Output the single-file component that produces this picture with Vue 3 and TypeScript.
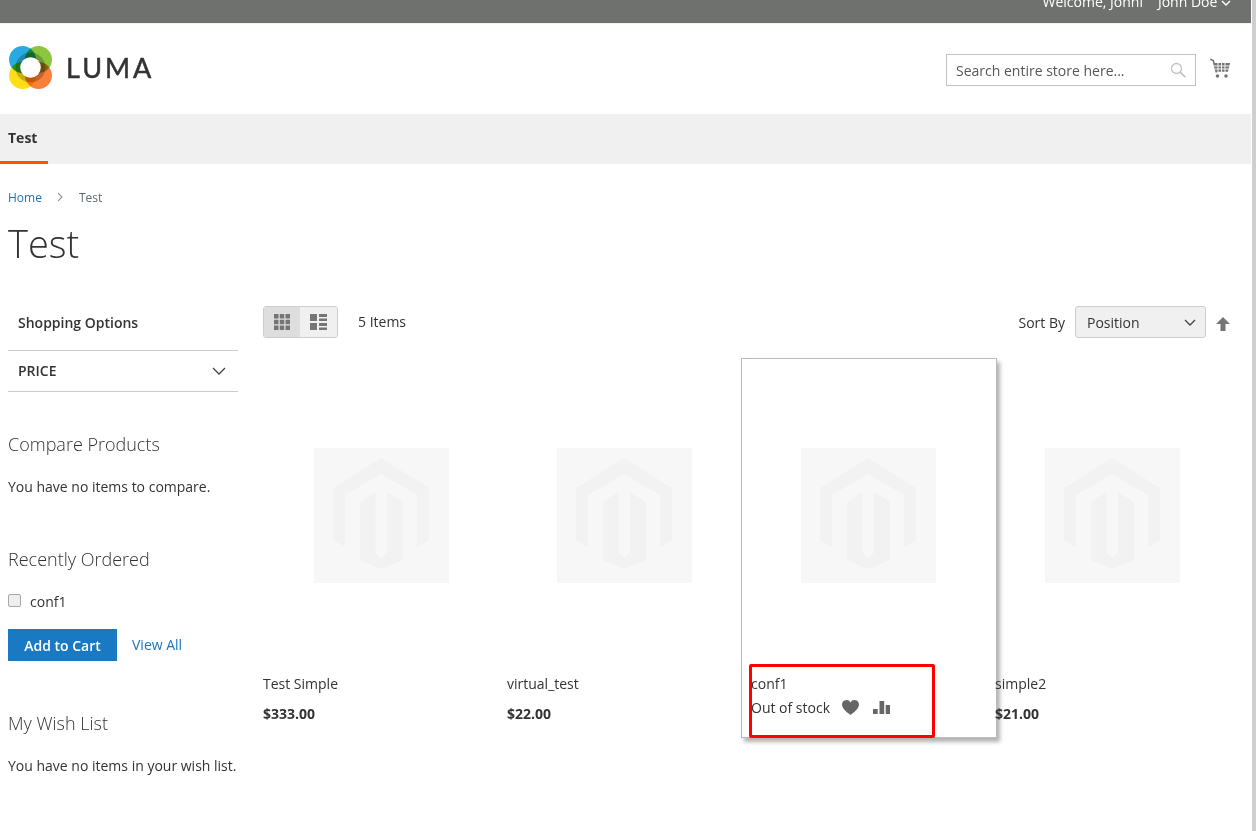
<script setup lang="ts">
interface Product {
  name: string
  price?: string
  hover?: boolean
}

const products: Product[] = [
  { name: 'Test Simple', price: '$333.00' },
  { name: 'virtual_test', price: '$22.00' },
  { name: 'conf1', hover: true },
  { name: 'simple2', price: '$21.00' },
]
</script>

<template>
  <div class="page">
    <div class="top-bar">
      <span>Welcome, Johni</span>
      <span class="customer">John Doe
        <svg width="10" height="6" viewBox="0 0 10 6"><path d="M1 1l4 4 4-4" fill="none" stroke="#fff" stroke-width="1.4" /></svg>
      </span>
    </div>

    <header class="header">
      <div class="logo">
        <svg class="logo-mark" width="43" height="43" viewBox="0 0 43 43">
          <circle cx="13.500" cy="13.500" r="13.500" fill="#29abe2" />
          <circle cx="29.500" cy="13.500" r="13.500" fill="#8cc63f" />
          <circle cx="13.500" cy="29.500" r="13.500" fill="#ffdd17" />
          <circle cx="29.500" cy="29.500" r="13.500" fill="#f9803a" />
          <circle cx="21.500" cy="21.500" r="15" fill="#000" opacity="0.22" />
          <circle cx="21.500" cy="21.500" r="10.300" fill="#fff" class="hole" />
        </svg>
        <span class="logo-text">LUMA</span>
      </div>
      <div class="header-right">
        <div class="search">
          <span>Search entire store here...</span>
          <svg width="16" height="16" viewBox="0 0 16 16">
            <circle cx="6.500" cy="6.500" r="5" fill="none" stroke="#c2c2c2" stroke-width="1.300" />
            <path d="M10.200 10.200l5 5" stroke="#c2c2c2" stroke-width="1.800" />
          </svg>
        </div>
        <svg class="cart" width="20" height="20" viewBox="0 0 20 20">
          <path d="M0.300 1.200l3 1.300 3.200 12" fill="none" stroke="#757575" stroke-width="1.600" />
          <path d="M3.500 5H20l-2 8.800H5.800z" fill="#757575" />
          <path d="M4 8h15.500M5 11h14M8 5v9M11.500 5v9M15 5v9" stroke="#fff" stroke-width="0.900" />
          <circle cx="7.500" cy="18" r="1.800" fill="#757575" />
          <circle cx="16" cy="18" r="1.800" fill="#757575" />
        </svg>
      </div>
    </header>

    <nav class="nav">
      <a class="nav-item">Test</a>
    </nav>

    <main class="content">
      <div class="breadcrumbs">
        <a>Home</a>
        <svg width="6" height="10" viewBox="0 0 6 10"><path d="M1 1l4 4-4 4" fill="none" stroke="#999" stroke-width="1.100" /></svg>
        <span class="current">Test</span>
      </div>
      <h1 class="title">Test</h1>

      <div class="columns">
        <aside class="sidebar">
          <div class="filter-title">Shopping Options</div>
          <div class="filter-row">
            <span>PRICE</span>
            <svg width="14" height="8" viewBox="0 0 14 8"><path d="M1 1l6 6 6-6" fill="none" stroke="#444" stroke-width="1.300" /></svg>
          </div>

          <h2 class="block-title compare">Compare Products</h2>
          <p class="block-text">You have no items to compare.</p>

          <h2 class="block-title ordered">Recently Ordered</h2>
          <label class="ordered-item"><input type="checkbox" /><span>conf1</span></label>
          <div class="ordered-actions">
            <button class="primary">Add to Cart</button>
            <a>View All</a>
          </div>

          <h2 class="block-title wish">My Wish List</h2>
          <p class="block-text">You have no items in your wish list.</p>
        </aside>

        <section class="products">
          <div class="toolbar">
            <div class="modes">
              <span class="mode active">
                <svg width="16" height="16" viewBox="0 0 16 16" fill="#757575">
                  <path d="M0 0h4.500v4.500H0zM5.750 0h4.500v4.500h-4.500zM11.500 0H16v4.500h-4.500zM0 5.750h4.500v4.500H0zM5.750 5.750h4.500v4.500h-4.500zM11.500 5.750H16v4.500h-4.500zM0 11.500h4.500V16H0zM5.750 11.500h4.500V16h-4.500zM11.500 11.500H16V16h-4.500z" />
                </svg>
              </span>
              <span class="mode">
                <svg width="17" height="16" viewBox="0 0 17 16" fill="#757575">
                  <path d="M0 0h7v7H0zM9 0h8v3H9zM9 4.500h8V7H9zM0 9h7v7H0zM9 9h8v3H9zM9 13.500h8V16H9z" />
                </svg>
              </span>
            </div>
            <span class="amount">5 Items</span>
            <div class="sorter">
              <span>Sort By</span>
              <div class="select">
                <span>Position</span>
                <svg width="12" height="7" viewBox="0 0 12 7"><path d="M1 1l5 5 5-5" fill="none" stroke="#444" stroke-width="1.300" /></svg>
              </div>
              <svg class="sort-arrow" width="14" height="14" viewBox="0 0 14 14"><path d="M7 0l7 7H9.500v7h-5V7H0z" fill="#757575" /></svg>
            </div>
          </div>

          <div class="grid">
            <article v-for="p in products" :key="p.name" class="product" :class="{ hover: p.hover }">
              <div class="photo">
                <svg width="135" height="135" viewBox="0 0 135 135">
                  <rect width="135" height="135" fill="#f7f7f7" />
                  <path d="M67 10l48 30v52l-12 7V47L67 26 31 47v52l-12-7V40z" fill="#f2f2f2" />
                  <path d="M61.500 44v61l5.500 5 6-5V44l16 10v58l-22 9-21-9V54z" fill="#f2f2f2" />
                </svg>
              </div>
              <div class="name">{{ p.name }}</div>
              <div v-if="p.price" class="price">{{ p.price }}</div>
              <div v-else class="stock-row">
                <span>Out of stock</span>
                <svg class="heart" width="17" height="15" viewBox="0 0 18 16">
                  <path d="M9 16C6 13.500 0 9.500 0 5a4.800 4.800 0 0 1 9-2.400A4.800 4.800 0 0 1 18 5c0 4.500-6 8.500-9 11z" fill="#666" />
                </svg>
                <svg class="bars" width="17" height="13" viewBox="0 0 17 13" fill="#666">
                  <path d="M0 8h4.700v5H0zM6.500 0h4.700v13H6.500zM12.700 4H17v9h-4.300z" />
                </svg>
              </div>
              <span v-if="p.hover" class="marker"></span>
            </article>
          </div>
        </section>
      </div>
    </main>
    <div class="edge"></div>
  </div>
</template>

<style>
html,
body {
  margin: 0;
  height: 100%;
  overflow: hidden;
  background: #fff;
}
</style>

<style scoped>
.page {
  position: relative;
  height: 831px;
  overflow: hidden;
  box-sizing: border-box;
  padding-right: 5px;
  font-family: 'Open Sans', sans-serif;
  font-size: 14px;
  color: #333;
}

.edge {
  position: absolute;
  top: 0;
  right: 0;
  width: 4px;
  height: 100%;
  background: #cfcfcf;
}

.top-bar {
  height: 23px;
  box-sizing: content-box;
  background: #6e716e;
  border-bottom: 1px solid #f2f2f2;
  color: #fff;
  display: flex;
  justify-content: flex-end;
  align-items: flex-start;
  gap: 15px;
  padding-right: 20px;
  overflow: hidden;
  line-height: 20px;
}

.top-bar span {
  margin-top: -8px;
}

.customer svg {
  vertical-align: 1px;
}

.header {
  height: 90px;
  display: flex;
  justify-content: space-between;
  align-items: flex-start;
  padding-left: 9px;
  padding-right: 21px;
}

.logo {
  display: flex;
  align-items: center;
  gap: 14px;
  margin-top: 22px;
}

.logo-mark circle {
  mix-blend-mode: multiply;
}

.logo-mark .hole {
  mix-blend-mode: normal;
}

.logo-text {
  font-family: Lato, sans-serif;
  font-size: 27px;
  letter-spacing: 3px;
  color: #333;
  line-height: 42px;
  -webkit-text-stroke: 0.5px #333;
}

.header-right {
  display: flex;
  align-items: flex-start;
  gap: 14px;
  margin-top: 30px;
}

.search {
  width: 250px;
  height: 32px;
  box-sizing: border-box;
  border: 1px solid #c2c2c2;
  display: flex;
  align-items: center;
  justify-content: space-between;
  padding: 0 9px;
  color: #575757;
}

.cart {
  margin-top: 4px;
}

.nav {
  height: 50px;
  background: #f0f0f0;
  display: flex;
}

.nav-item {
  width: 40px;
  padding-left: 8px;
  height: 47px;
  line-height: 48px;
  font-weight: 700;
  border-bottom: 3px solid #ff5501;
  color: #333;
}

.content {
  padding-left: 8px;
}

.breadcrumbs {
  display: flex;
  align-items: center;
  height: 16px;
  margin-top: 25px;
  font-size: 12px;
}

.breadcrumbs a {
  color: #1a75bb;
}

.breadcrumbs svg {
  margin-left: 15px;
}

.current {
  margin-left: 16px;
  color: #5f6b75;
}

.title {
  margin: 13px 0 0;
  font-size: 38px;
  font-weight: 300;
  line-height: 50px;
  color: #333;
}

.columns {
  display: flex;
  margin-top: 38px;
}

.sidebar {
  width: 230px;
  flex: none;
  margin-right: 25px;
}

.filter-title {
  height: 45px;
  box-sizing: border-box;
  padding: 0 10px;
  line-height: 34px;
  font-weight: 600;
  border-bottom: 1px solid #ccc;
}

.filter-row {
  height: 40px;
  padding: 0 12px 0 10px;
  border-bottom: 1px solid #ccc;
  display: flex;
  align-items: center;
  justify-content: space-between;
  font-weight: 600;
}

.filter-row span {
  margin-bottom: 2px;
}

.block-title {
  margin: 0;
  font-size: 18px;
  font-weight: 300;
  line-height: 24px;
  color: #333;
}

.compare {
  margin-top: 40px;
}

.ordered,
.wish {
  margin-top: 50px;
}

.block-text {
  margin: 21px 0 0;
  line-height: 20px;
  white-space: nowrap;
}

.ordered-item {
  display: flex;
  align-items: center;
  gap: 9px;
  margin-top: 21px;
  height: 20px;
}

.ordered-item span {
  margin-bottom: 2px;
}

.ordered-item input {
  appearance: none;
  margin: 0 0 4px;
  width: 13px;
  height: 13px;
  box-sizing: border-box;
  border: 1px solid #a8a8a8;
  border-radius: 2px;
  background: #eee;
}

.ordered-actions {
  display: flex;
  align-items: center;
  gap: 15px;
  margin-top: 17px;
}

.ordered-actions a {
  color: #1a75bb;
  margin-bottom: 2px;
}

.primary {
  width: 109px;
  height: 32px;
  border: none;
  background: #1979c3;
  color: #fff;
  font-family: inherit;
  font-size: 14px;
  font-weight: 600;
  padding: 0;
}

.products {
  flex: 1;
  min-width: 0;
}

.toolbar {
  display: flex;
  align-items: center;
  height: 32px;
  padding-right: 21px;
}

.modes {
  display: flex;
  border: 1px solid #ccc;
  border-radius: 3px;
  overflow: hidden;
  height: 30px;
}

.mode {
  width: 37px;
  display: flex;
  align-items: center;
  justify-content: center;
  background: #f0f0f0;
}

.mode.active {
  width: 36px;
  background: #dedede;
}

.amount {
  margin-left: 20px;
  margin-bottom: 2px;
}

.sorter {
  margin-left: auto;
  display: flex;
  align-items: center;
}

.select {
  width: 131px;
  height: 32px;
  box-sizing: border-box;
  margin-left: 10px;
  border: 1px solid #ccc;
  border-radius: 3px;
  background: #f0f0f0;
  display: flex;
  align-items: center;
  justify-content: space-between;
  padding: 0 9px 0 11px;
}

.sort-arrow {
  margin-left: 10px;
  margin-top: 4px;
}

.grid {
  display: flex;
  margin-top: 20px;
}

.product {
  position: relative;
  width: 244px;
  flex: none;
  box-sizing: border-box;
  height: 380px;
}

.photo {
  width: 235px;
  height: 315px;
  display: flex;
  align-items: center;
  justify-content: center;
}

.product:first-child .photo {
  width: 237px;
}

.hover::before {
  content: '';
  position: absolute;
  top: 0;
  left: -10px;
  width: 256px;
  height: 380px;
  box-sizing: border-box;
  border: 1px solid #bbb;
  box-shadow: 3px 4px 4px rgba(0, 0, 0, 0.3);
  background: #fff;
  z-index: 0;
}

.hover > * {
  position: relative;
  z-index: 1;
}

.name {
  line-height: 20px;
  margin-top: 1px;
}

.price {
  margin-top: 10px;
  font-weight: 700;
  line-height: 20px;
}

.stock-row {
  display: flex;
  align-items: center;
  margin-top: 3px;
  height: 20px;
}

.heart {
  margin-left: 12px;
}

.bars {
  margin-left: 14px;
}

.hover > .marker {
  position: absolute;
  left: -2px;
  top: 306px;
  width: 186px;
  height: 74px;
  box-sizing: border-box;
  border: 3px solid #f00;
  border-radius: 2px;
  z-index: 2;
}
</style>
